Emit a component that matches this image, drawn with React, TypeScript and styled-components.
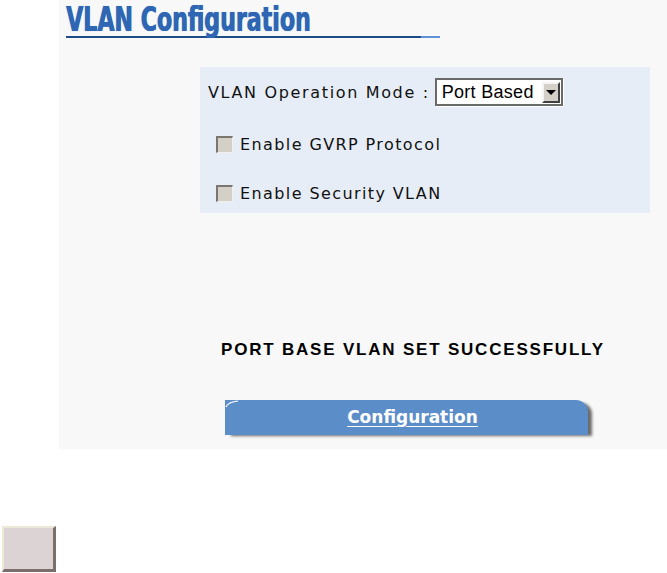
import React from "react";
import styled, { createGlobalStyle } from "styled-components";

const Global = createGlobalStyle`
  html, body { margin: 0; padding: 0; background: #ffffff; }
  body { font-family: "DejaVu Sans", Verdana, sans-serif; }
`;

const Page = styled.div`
  width: 667px;
  height: 573px;
  display: flex;
  flex-direction: column;
  overflow: hidden;
`;

const Main = styled.div`
  margin-left: 59px;
  width: 608px;
  height: 451px;
  background: #f8f8f8;
  display: flex;
  flex-direction: column;
`;

const TitleWrap = styled.div`
  margin: 4px 0 0 7px;
  width: 374px;
  display: flex;
  flex-direction: column;
`;

const Title = styled.h1`
  margin: 0;
  height: 32px;
  font-family: "DejaVu Sans Condensed", "DejaVu Sans", sans-serif;
  font-weight: bold;
  font-size: 33px;
  line-height: 32px;
  color: #2f66b3;
  white-space: nowrap;
  transform: scaleX(0.745);
  transform-origin: left center;
  text-shadow: 0 0 1px rgba(47, 102, 179, 0.6), 0.6px 0 0 #2f66b3;
`;

const TitleRule = styled.div`
  height: 2px;
  background: linear-gradient(to right, #1d4d86 0%, #1d4d86 95%, #5f92d8 95%, #5f92d8 100%);
`;

const Panel = styled.div`
  margin: 29px 0 0 141px;
  width: 450px;
  height: 146px;
  background: #e6edf6;
  box-sizing: border-box;
  padding: 11px 0 0 8px;
  display: flex;
  flex-direction: column;
  font-size: 16px;
  letter-spacing: 1.4px;
  color: #111;
`;

const ModeRow = styled.div`
  display: flex;
  align-items: center;
  gap: 5px;
  height: 28px;
  letter-spacing: 1.65px;
`;

const Select = styled.div`
  width: 128px;
  height: 28px;
  box-sizing: border-box;
  border: 2px solid #6a6a6a;
  box-shadow: 1px 1px 0 #ffffff;
  background: #fff;
  display: flex;
  align-items: center;
  justify-content: space-between;
  padding: 0 1px 0 5px;
  font-family: "Liberation Sans", Arial, sans-serif;
  font-size: 18px;
  letter-spacing: 0.3px;
  color: #000;
`;

const DropBtn = styled.div`
  width: 18px;
  height: 21px;
  box-sizing: border-box;
  background: #d4d0c8;
  border-top: 2px solid #f4f4f4;
  border-left: 2px solid #f4f4f4;
  border-right: 2px solid #404040;
  border-bottom: 2px solid #404040;
  display: flex;
  align-items: center;
  justify-content: center;
`;

const Arrow = styled.div`
  width: 0;
  height: 0;
  border-left: 5px solid transparent;
  border-right: 5px solid transparent;
  border-top: 5px solid #000;
`;

const CheckRow = styled.label<{ $top: number }>`
  display: flex;
  align-items: center;
  gap: 7px;
  margin-left: 8px;
  margin-top: ${(p) => p.$top}px;
  height: 20px;
`;

const Box = styled.span`
  width: 17px;
  height: 17px;
  box-sizing: border-box;
  background: #d4d0c8;
  border-top: 2px solid #7a7670;
  border-left: 2px solid #7a7670;
  border-right: 1px solid #f2f0ec;
  border-bottom: 1px solid #f2f0ec;
`;

const Message = styled.div`
  margin: 127px 0 0 162px;
  font-family: "Liberation Sans", Arial, sans-serif;
  font-weight: bold;
  font-size: 17px;
  letter-spacing: 1.8px;
  line-height: 20px;
  color: #000;
  white-space: nowrap;
`;

const TabWrap = styled.div`
  margin: 40px 0 0 166px;
  width: 372px;
  display: flex;
`;

const Tab = styled.div`
  position: relative;
  width: 363px;
  height: 35px;
  background: #5b8dc8;
  border-top-right-radius: 12px;
  box-shadow: 5px 2px 3px -1px rgba(60, 60, 60, 0.75);
  display: flex;
  justify-content: center;
  padding-top: 7px;
  box-sizing: border-box;
`;

const Corner = styled.svg`
  position: absolute;
  left: 0;
  top: 0;
`;

const TabLink = styled.a`
  font-family: "DejaVu Sans", Verdana, sans-serif;
  font-weight: bold;
  font-size: 17px;
  color: #ffffff;
  text-decoration: underline;
  text-underline-offset: 3px;
  margin-left: 12px;
`;

const Footer = styled.div`
  margin: 77px 0 0 2px;
`;

const GrayButton = styled.button`
  width: 54px;
  height: 46px;
  padding: 0;
  box-sizing: border-box;
  background: #dcd4d4;
  border-top: 2px solid #ece9d8;
  border-left: 2px solid #ece9d8;
  border-right: 3px solid #7d6e6e;
  border-bottom: 3px solid #7d6e6e;
`;

export default function App() {
  return (
    <Page>
      <Global />
      <Main>
        <TitleWrap>
          <Title>VLAN Configuration</Title>
          <TitleRule />
        </TitleWrap>
        <Panel>
          <ModeRow>
            <span>VLAN Operation Mode{"\u00a0"}:</span>
            <Select>
              <span>Port Based</span>
              <DropBtn>
                <Arrow />
              </DropBtn>
            </Select>
          </ModeRow>
          <CheckRow $top={28}>
            <Box />
            <span>Enable GVRP Protocol</span>
          </CheckRow>
          <CheckRow $top={29}>
            <Box />
            <span>Enable Security VLAN</span>
          </CheckRow>
        </Panel>
        <Message>PORT BASE VLAN SET SUCCESSFULLY</Message>
        <TabWrap>
          <Tab>
            <Corner width="14" height="8" viewBox="0 0 14 8">
              <path d="M1 7 Q3 2 13 1" stroke="#ffffff" strokeWidth="1.2" fill="none" />
            </Corner>
            <TabLink href="#">Configuration</TabLink>
          </Tab>
        </TabWrap>
      </Main>
      <Footer>
        <GrayButton aria-label="button" />
      </Footer>
    </Page>
  );
}
